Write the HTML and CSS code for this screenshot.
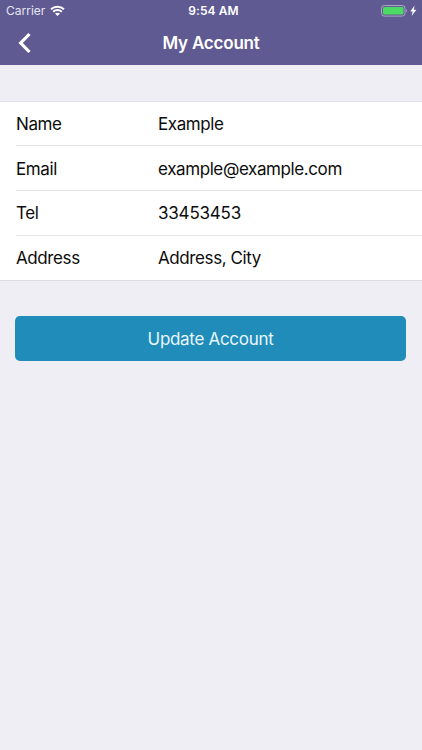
FILE: index.html
```html
<!DOCTYPE html>
<html lang="en">

<head>
    <meta charset="UTF-8">
    <meta name="viewport" content="width=device-width, initial-scale=1.0">
    <title>My Account</title>
    <link rel="stylesheet" href="styles.css">
</head>

<body>
    <header>
        <div class="status">
            <div class="carrier">
                <span>Carrier</span>
                <svg class="wifi" width="15" height="12" viewBox="0 0 15 12">
                    <path d="M1 4.3C4.6 0.8 10.4 0.8 14 4.3M3.2 6.7C5.6 4.4 9.4 4.4 11.8 6.7" fill="none" stroke="#fff" stroke-width="1.9"/>
                    <path d="M5 8.6C6.4 7.3 8.6 7.3 10 8.6L7.5 11Z" fill="#fff"/>
                </svg>
            </div>
            <div class="time">9:54 AM</div>
            <div class="battery">
                <svg width="36" height="12" viewBox="0 0 36 12">
                    <rect x="0.5" y="0.5" width="23.5" height="10.6" rx="2.8" fill="none" stroke="#aaa7c9"/>
                    <rect x="2" y="2" width="20.5" height="7.6" rx="1.4" fill="#4cd964"/>
                    <path d="M25.2 4C26.4 4.6 26.4 7 25.2 7.6Z" fill="#aaa7c9"/>
                    <path d="M33.6 0.5L29.3 6.5H31.7L30.6 11L35.4 4.8H32.7Z" fill="#fff"/>
                </svg>
            </div>
        </div>
        <div class="nav">
            <svg class="back" width="14" height="22" viewBox="0 0 14 22">
                <path d="M11.5 2L2.7 11L11.5 20" fill="none" stroke="#fff" stroke-width="3.2"/>
            </svg>
            <h1>My Account</h1>
        </div>
    </header>

    <div class="list">
        <div class="row">
            <div class="label">Name</div>
            <div class="value">Example</div>
        </div>
        <div class="row">
            <div class="label">Email</div>
            <div class="value">example@example.com</div>
        </div>
        <div class="row">
            <div class="label">Tel</div>
            <div class="value tel">33453453</div>
        </div>
        <div class="row">
            <div class="label">Address</div>
            <div class="value">Address, City</div>
        </div>
    </div>

    <button class="update">Update Account</button>
</body>

</html>
```

FILE: styles.css
```css
* {
    box-sizing: border-box;
}

body {
    margin: 0;
    min-height: 750px;
    background-color: #efeef5;
    font-family: Inter, "Liberation Sans", sans-serif;
    color: #0c0c0c;
}

header {
    height: 65px;
    background-color: #605a92;
    color: #fff;
}

.status {
    display: grid;
    grid-template-columns: 1fr auto 1fr;
    align-items: center;
    height: 22px;
    padding: 0 5px 0 6px;
    font-size: 12px;
    line-height: 22px;
}

.carrier {
    display: flex;
    align-items: center;
    gap: 5px;
    color: #e6e4f0;
}

.wifi {
    margin-bottom: 1px;
}

.time {
    padding-left: 4px;
    font-weight: 600;
    letter-spacing: 0.1px;
}

.battery {
    display: flex;
    justify-content: flex-end;
}

.nav {
    display: grid;
    grid-template-columns: 1fr auto 1fr;
    align-items: center;
    height: 43px;
}

.back {
    margin: 0 0 2px 18px;
}

.nav h1 {
    margin: 0;
    font-size: 17px;
    font-weight: 600;
    line-height: 43px;
    letter-spacing: -0.2px;
}

.list {
    margin-top: 36px;
    background-color: #fff;
    border-top: 1px solid #e2e1e7;
    border-bottom: 1px solid #dddce2;
}

.row {
    display: flex;
    height: 45px;
    margin-left: 16px;
    font-size: 17px;
    line-height: 44px;
    letter-spacing: -0.4px;
    border-bottom: 1px solid #e4e4e6;
}

.row:first-child {
    height: 44px;
    line-height: 45px;
}

.row:nth-child(2) {
    line-height: 46px;
}

.row:last-child {
    height: 44px;
    border-bottom: none;
}

.label {
    width: 142px;
}

.tel {
    letter-spacing: -0.2px;
}

.update {
    display: block;
    width: 391px;
    height: 45px;
    margin: 35px 0 0 15px;
    padding: 0;
    border: none;
    border-radius: 5px;
    background-color: #1f8cb9;
    color: #e9f6fb;
    font-family: inherit;
    font-size: 17px;
    line-height: 46px;
    letter-spacing: -0.3px;
}
```
